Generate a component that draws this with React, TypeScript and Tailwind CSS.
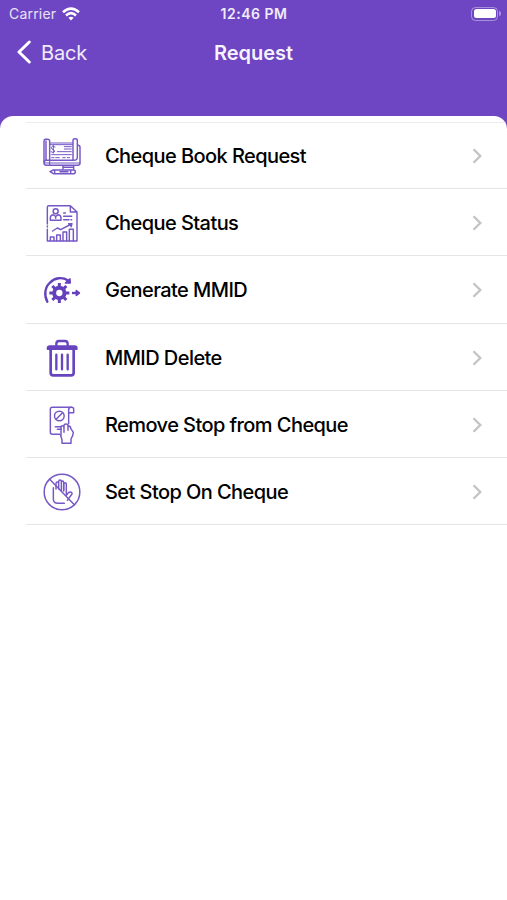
import type { ReactNode } from "react";

interface IconProps {
  viewBox?: string;
  strokeWidth?: number;
  children: ReactNode;
}

const Icon = ({ viewBox = "24 17 120 120", strokeWidth = 4.4, children }: IconProps) => (
  <svg
    viewBox={viewBox}
    className="size-10 shrink-0"
    fill="none"
    stroke="#7657c6"
    strokeWidth={strokeWidth}
    strokeLinecap="round"
    strokeLinejoin="round"
  >
    {children}
  </svg>
);

const ChequeBookIcon = () => (
  <Icon viewBox="126 77 120 120">
    <path d="M149 98H218M149 103H218" strokeWidth="3" />
    <path d="M132 155V92Q132 87 137 87H143Q149 87 149 93V150M138 92V150" />
    <path d="M219 150V90Q219 85 224 85H227Q232 85 232 91V140Q232 150 222 150H138" />
    <path d="M234 105Q240 105 240 111V158Q240 165 233 165H139Q132 165 132 158Q132 150 139 150" />
    <path d="M149 150V164M133 158H240" strokeWidth="3.5" />
    <path d="M165 110Q155 105 154 112Q155 117 160 118Q166 121 163 125Q159 129 153 124M160 105V128" strokeWidth="3" />
    <path d="M193 109H214M193 116H214M172 124H214M155 133H214" strokeWidth="3" />
    <path d="M155 142H162M167 142H178M188 142H196M202 142H209" strokeWidth="3" />
    <path d="M189 167V176M221 167V176M189 171H221" />
    <path d="M150 184L160 179H221Q226 179 226 184.500Q226 190 221 190H160ZM164 179V190M212 179V190M180 184H204" />
  </Icon>
);

const ChequeStatusIcon = () => (
  <Icon>
    <path d="M40 80V30Q40 25 45 25H109L129 44V131H40V96M40 86V89M109 25V44H129" />
    <circle cx="65" cy="42" r="7.500" />
    <path d="M49 69V62Q49 53 57 52L65 57L73 52Q81 53 81 62V69ZM65 57V63" />
    <path d="M89 47H94M89 57H113M89 67H105M111 67H113" />
    <path d="M56 101L70 92L80 97L112 80M104 79L114 79L111 88" />
    <path d="M49 130V119H60V130M68 130V113H79V130M87 130V104H98V130M106 130V96H118V130" />
  </Icon>
);

const GenerateIcon = () => (
  <Icon viewBox="24 15 120 120" strokeWidth={7}>
    <g stroke="#6540bd">
      <path d="M40 110C29 91 33 66 48 53C62 38 85 35 101 46" />
      <path d="M108 41L109 54L94 54Z" fill="#6540bd" strokeWidth="4" />
      <circle cx="76" cy="84" r="15.500" strokeWidth="12" />
      <path
        d="M76 54V65M76 103V114M46 84H57M95 84H106M55 63L63 71M89 97L97 105M55 105L63 97M89 71L97 63"
        strokeWidth="9"
        strokeLinecap="butt"
      />
      <path d="M114 84H128" strokeLinecap="butt" />
      <path d="M127 77L136 84L127 91Z" fill="#6540bd" strokeWidth="5" />
    </g>
  </Icon>
);

const DeleteIcon = () => (
  <Icon viewBox="24 16 120 120" strokeWidth={7}>
    <g stroke="#6845be">
      <path d="M67 38V33Q67 25 75 25H93Q101 25 101 33V38" />
      <path d="M41 49V47Q41 41 47 41H122Q128 41 128 47V49Z" fill="#6845be" strokeWidth="6" />
      <path d="M50 52V120Q50 128 58 128H111Q119 128 119 120V52" strokeWidth="8" />
      <path d="M67 66V110M84 66V110M101 66V110" />
    </g>
  </Icon>
);

const RemoveStopIcon = () => (
  <Icon viewBox="24 16 120 120">
    <path d="M78 104H55Q49 104 49 98V29Q49 23 55 23H113Q119 23 119 29V39H104V72" />
    <path d="M104 39V30Q104 23 111 23" />
    <circle cx="76" cy="49" r="14.500" />
    <path d="M67 58L85 40M64 81H81M70 89H81" />
    <path d="M81 108V84Q81 78 85 78Q90 78 90 84V98M90 90V79Q90 73 96 73Q102 73 102 79V92M104 79Q110 79 110 86L118 98L116 108L111 118V131H84V120L80 108" />
  </Icon>
);

const SetStopIcon = () => (
  <Icon>
    <circle cx="84" cy="77" r="53.500" />
    <path d="M47 39L121 115" />
    <path d="M58 64V98Q58 111 72 111H91M100 102L114 83Q115 77 108 77Q103 77 97 87V54Q97 49 93 49Q89 49 89 54V72" />
    <path d="M66 68V52Q66 47 70 47Q74 47 74 52V68M74 51V46Q74 41 78 41Q82 41 82 46V73M82 49Q82 44 85.500 44Q89 44 89 49V74" />
  </Icon>
);

const items = [
  { label: "Cheque Book Request", icon: <ChequeBookIcon /> },
  { label: "Cheque Status", icon: <ChequeStatusIcon /> },
  { label: "Generate MMID", icon: <GenerateIcon /> },
  { label: "MMID Delete", icon: <DeleteIcon /> },
  { label: "Remove Stop from Cheque", icon: <RemoveStopIcon /> },
  { label: "Set Stop On Cheque", icon: <SetStopIcon /> },
];

const StatusBar = () => (
  <div className="grid h-7 grid-cols-3 items-center pl-[9px] pr-[6px] text-[14px] leading-none">
    <div className="flex items-center gap-[6px]">
      <span className="tracking-[0.2px] text-white/85">Carrier</span>
      <svg viewBox="0 0 18 14" className="mb-px h-[14px] w-[18px]" fill="none" stroke="white" strokeWidth="2.6">
        <path d="M1 5.2Q9-2 17 5.2M4 8.4Q9 4 14 8.4" />
        <path d="M6.4 10.8Q9 8.5 11.6 10.8L9 13.4Z" fill="white" stroke="none" />
      </svg>
    </div>
    <span className="-ml-[2px] text-center font-semibold tracking-[0.5px] text-white/90">12:46 PM</span>
    <div className="flex items-center justify-end gap-px">
      <div className="mb-px h-[14px] w-[27px] rounded-[4.5px] border border-white/40 p-[1.5px]">
        <div className="h-full rounded-[2.5px] bg-white" />
      </div>
      <div className="mb-px h-[5px] w-[2px] rounded-r-full bg-white/40" />
    </div>
  </div>
);

const App = () => {
  return (
    <div className="flex h-[900px] w-[507px] flex-col overflow-hidden bg-[#6e45c2] font-['Inter','Liberation_Sans',sans-serif]">
      <header className="h-[115.5px] shrink-0 text-white">
        <StatusBar />
        <nav className="grid h-12 grid-cols-3 items-center px-[17px]">
          <button className="flex items-center gap-[10px] text-[20px] tracking-[-0.2px] text-white/90">
            <svg viewBox="0 0 14 24" className="h-6 w-[14px]" fill="none" stroke="white" strokeWidth="3" strokeLinecap="round" strokeLinejoin="round">
              <path d="M12.3 2L2 12L12.3 22" />
            </svg>
            <span className="pt-px">Back</span>
          </button>
          <h1 className="pt-px text-center text-[20px] font-semibold text-white/95">Request</h1>
        </nav>
      </header>
      <main className="flex-1 overflow-hidden rounded-t-[13px] bg-white pt-[6.3px]">
        <ul className="ml-[26px] border-t border-[#ececec]">
          {items.map(({ label, icon }) => (
            <li
              key={label}
              className="flex h-[67.2px] items-center border-b border-[#e6e6e8] pt-[2px] pl-4 pr-[25px] first:h-[66.4px]"
            >
              {icon}
              <span className="ml-[23px] flex-1 text-[20px] font-medium tracking-[-0.57px] text-black">{label}</span>
              <svg viewBox="0 0 10 16" className="h-4 w-[10px]" fill="none" stroke="#c3c3c5" strokeWidth="2.3">
                <path d="M1.5 1.2L8.3 8L1.5 14.8" />
              </svg>
            </li>
          ))}
        </ul>
      </main>
    </div>
  );
};

export default App;
